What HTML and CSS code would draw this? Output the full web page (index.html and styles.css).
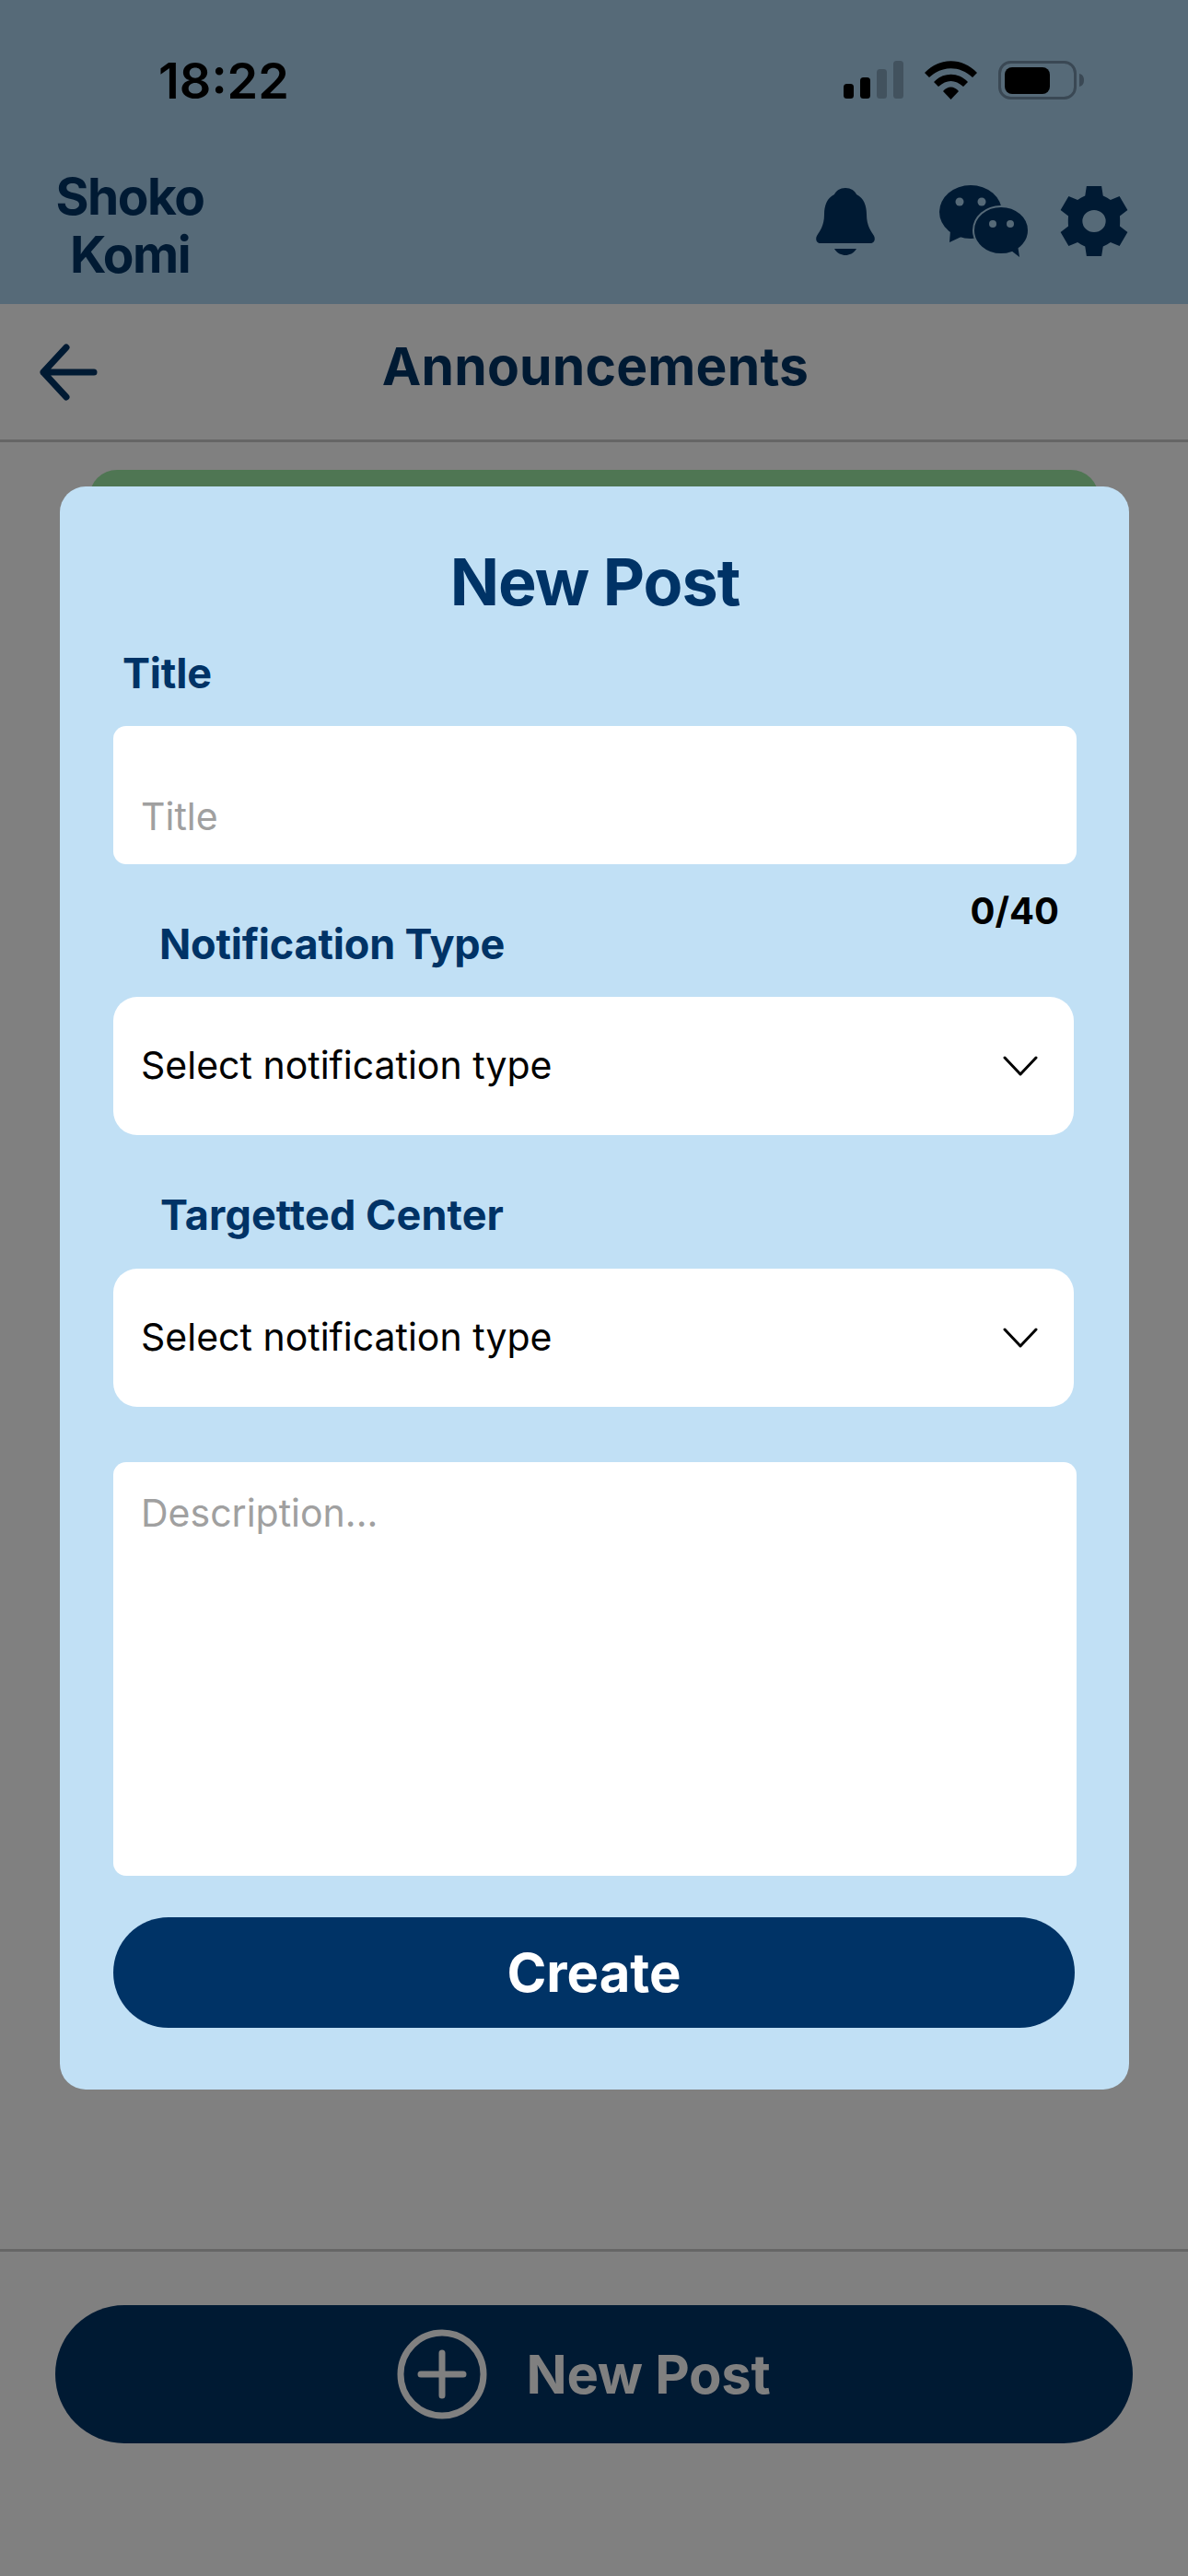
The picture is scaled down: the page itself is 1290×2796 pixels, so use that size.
FILE: index.html
```html
<!DOCTYPE html>
<html lang="en">
<head>
    <meta charset="UTF-8">
    <meta name="viewport" content="width=device-width, initial-scale=1.0">
    <title>New Post</title>
    <link rel="stylesheet" href="styles.css">
</head>
<body>
    <div class="page">
        <header class="top">
            <div class="status-bar">
                <span class="time">18:22</span>
                <div class="status-icons">
                    <svg width="65" height="42" viewBox="0 0 65 42">
                        <rect x="0" y="25" width="11" height="16" rx="3.5" fill="#000"/>
                        <rect x="18" y="18" width="11" height="23" rx="3.5" fill="#000"/>
                        <rect x="36" y="9" width="11" height="32" rx="3.5" fill="#42525e"/>
                        <rect x="54" y="0" width="11" height="41" rx="3.5" fill="#42525e"/>
                    </svg>
                    <svg width="57" height="42" viewBox="0 0 57 42">
                        <path d="M0 13 C16 -4 41 -4 57 13 L52 18 C38 5 19 5 5 18 Z" fill="#000"/>
                        <path d="M10 23 C20 12 37 12 47 23 L42 28 C33 20 24 20 15 28 Z" fill="#000"/>
                        <path d="M20 33 C25 27 32 27 37 33 L28.500 42 Z" fill="#000"/>
                    </svg>
                    <svg width="93" height="42" viewBox="0 0 93 42">
                        <rect x="1.500" y="1.500" width="82" height="39" rx="12" fill="none" stroke="#3a4854" stroke-width="3"/>
                        <rect x="7" y="7" width="49" height="29" rx="8" fill="#000"/>
                        <path d="M88 14 C92 15 93 18 93 21 C93 24 92 27 88 28 Z" fill="#3a4854"/>
                    </svg>
                </div>
            </div>
            <div class="brand-row">
                <div class="brand-name">Shoko<br>Komi</div>
                <div class="brand-icons">
                    <svg class="icon-bell" width="64" height="73" viewBox="0 0 64 73">
                        <path d="M32 0 C38 0 42 3 44 7 C52 11 55 19 55 29 C55 41 60 47 63 52 C65 56 63 60 59 60 L5 60 C1 60 -1 56 1 52 C4 47 9 41 9 29 C9 19 12 11 20 7 C22 3 26 0 32 0 Z" fill="#001a33"/>
                        <path d="M20 66 L44 66 C41 71 36 73 32 73 C28 73 23 71 20 66 Z" fill="#001a33"/>
                    </svg>
                    <svg class="icon-chat" width="98" height="80" viewBox="0 0 98 80">
                        <ellipse cx="34" cy="30" rx="34" ry="29" fill="#001a33"/>
                        <path d="M12 50 L11 63 L28 55 Z" fill="#001a33"/>
                        <ellipse cx="67" cy="50" rx="30" ry="26" fill="#001a33" stroke="#566a78" stroke-width="2"/>
                        <path d="M78 72 L87 79 L85 66 Z" fill="#001a33"/>
                        <circle cx="22" cy="19" r="4.500" fill="#566a78"/>
                        <circle cx="46" cy="19" r="4.500" fill="#566a78"/>
                        <circle cx="58" cy="43" r="4" fill="#566a78"/>
                        <circle cx="77" cy="43" r="4" fill="#566a78"/>
                    </svg>
                    <svg class="icon-gear" width="74" height="76" viewBox="0.8 0.3 22.4 23.4">
                        <path fill-rule="evenodd" d="M9.500 0.300 H14.500 L15 3.500 C15.900 3.900 16.700 4.300 17.500 4.900 L20.500 3.700 L23.200 8.300 L20.600 10.300 C20.700 11.300 20.700 12.700 20.600 13.700 L23.200 15.700 L20.500 20.300 L17.500 19.100 C16.700 19.700 15.900 20.100 15 20.500 L14.500 23.700 H9.500 L9 20.500 C8.100 20.100 7.300 19.700 6.500 19.100 L3.500 20.300 L0.800 15.700 L3.400 13.700 C3.300 12.700 3.300 11.300 3.400 10.300 L0.800 8.300 L3.500 3.700 L6.500 4.900 C7.300 4.300 8.100 3.900 9 3.500 Z M12 8.300 A3.900 3.700 0 1 0 12 15.700 A3.900 3.700 0 1 0 12 8.300 Z" fill="#001a33"/>
                    </svg>
                </div>
            </div>
        </header>

        <nav class="nav-bar">
            <svg width="66" height="62" viewBox="0 0 66 62">
                <path d="M32 4 L7 31 L32 58 M7 31 H62" fill="none" stroke="#001a33" stroke-width="7" stroke-linecap="round" stroke-linejoin="round"/>
            </svg>
            <h1 class="nav-title">Announcements</h1>
        </nav>

        <main class="feed">
            <div class="feed-card"></div>
        </main>

        <footer class="bottom-bar">
            <div class="new-post-btn">
                <svg width="98" height="98" viewBox="0 0 98 98">
                    <circle cx="49" cy="49" r="45" fill="none" stroke="#808080" stroke-width="7"/>
                    <path d="M26 49 H72 M49 26 V72" fill="none" stroke="#808080" stroke-width="7" stroke-linecap="round"/>
                </svg>
                <span>New Post</span>
            </div>
        </footer>

        <section class="modal">
            <h2 class="modal-title">New Post</h2>
            <div class="field-label title-label">Title</div>
            <div class="text-input title-input">Title</div>
            <div class="label-row">
                <div class="field-label notif-label">Notification Type</div>
                <div class="counter">0/40</div>
            </div>
            <div class="select-box">
                <span>Select notification type</span>
                <svg width="38" height="22" viewBox="0 0 38 22">
                    <path d="M2 2 L19 20 L36 2" fill="none" stroke="#000" stroke-width="3" stroke-linecap="round" stroke-linejoin="round"/>
                </svg>
            </div>
            <div class="field-label center-label">Targetted Center</div>
            <div class="select-box">
                <span>Select notification type</span>
                <svg width="38" height="22" viewBox="0 0 38 22">
                    <path d="M2 2 L19 20 L36 2" fill="none" stroke="#000" stroke-width="3" stroke-linecap="round" stroke-linejoin="round"/>
                </svg>
            </div>
            <div class="text-input description">Description...</div>
            <div class="create-btn">Create</div>
        </section>
    </div>
</body>
</html>
```

FILE: styles.css
```css
* {
    box-sizing: border-box;
}
body {
    margin: 0;
    font-family: Inter, "Noto Sans", sans-serif;
    background-color: #808080;
}
.page {
    position: relative;
    display: flex;
    flex-direction: column;
    width: 1290px;
    height: 2796px;
    overflow: hidden;
    background-color: #808080;
}

/* header */
.top {
    height: 330px;
    background-color: #566a78;
}
.status-bar {
    display: flex;
    justify-content: space-between;
    align-items: center;
    height: 174px;
    padding: 0 113px 0 172px;
}
.time {
    font-size: 54px;
    font-weight: 600;
    color: #000;
}
.status-icons {
    display: flex;
    align-items: center;
    gap: 23px;
}
.brand-row {
    display: flex;
    align-items: center;
    height: 156px;
    padding: 0 65px 24px 51px;
}
.brand-name {
    align-self: flex-start;
    width: 180px;
    margin-top: 8px;
    font-size: 55px;
    font-weight: 700;
    line-height: 63px;
    letter-spacing: -1.5px;
    text-align: center;
    color: #001a33;
}
.brand-icons {
    display: flex;
    align-items: center;
    margin-left: auto;
}
.icon-chat {
    margin-left: 70px;
}
.icon-gear {
    margin-left: 33px;
}

/* nav */
.nav-bar {
    display: flex;
    align-items: center;
    height: 150px;
    padding: 0 103px 0 40px;
    border-bottom: 3px solid #666;
}
.nav-title {
    flex: 1;
    margin: 0 0 12px;
    font-size: 57px;
    font-weight: 700;
    letter-spacing: 0.2px;
    text-align: center;
    color: #001a33;
}

/* page behind the modal */
.feed {
    flex: 1;
    padding: 30px 97px 0;
}
.feed-card {
    height: 300px;
    background-color: #4f7653;
    border-radius: 30px;
}
.bottom-bar {
    height: 355px;
    padding: 58px 60px 0;
    border-top: 3px solid #666;
}
.new-post-btn {
    display: flex;
    justify-content: center;
    align-items: center;
    gap: 42px;
    height: 150px;
    padding-right: 22px;
    font-size: 58px;
    font-weight: 700;
    letter-spacing: -0.3px;
    color: #808080;
    background-color: #001a33;
    border-radius: 75px;
}

/* modal */
.modal {
    position: absolute;
    top: 528px;
    left: 65px;
    width: 1161px;
    height: 1740px;
    padding: 62px 57px 0 58px;
    background-color: #c1e0f5;
    border-radius: 28px;
}
.modal-title {
    margin: 0;
    font-size: 70px;
    font-weight: 700;
    line-height: 84px;
    letter-spacing: -1px;
    text-align: center;
    color: #003366;
}
.field-label {
    font-size: 45px;
    font-weight: 700;
    line-height: 52px;
    letter-spacing: -0.2px;
    color: #003366;
}
.title-label {
    margin: 31px 0 31px 10px;
}
.text-input {
    width: 1046px;
    padding-left: 30px;
    font-size: 41px;
    line-height: 48px;
    color: #a0a0a0;
    background-color: #fff;
    border-radius: 14px;
}
.title-input {
    height: 150px;
    padding-top: 74px;
}
.label-row {
    display: flex;
    justify-content: space-between;
    align-items: flex-start;
    margin: 27px 0 31px;
    padding: 0 19px 0 50px;
}
.notif-label {
    padding-top: 34px;
}
.counter {
    font-size: 40px;
    font-weight: 700;
    line-height: 48px;
    color: #000;
}
.select-box {
    display: flex;
    justify-content: space-between;
    align-items: center;
    width: 1043px;
    height: 150px;
    padding: 0 39px 2px 30px;
    font-size: 41px;
    color: #000;
    background-color: #fff;
    border-radius: 26px;
}
.select-box svg {
    margin-top: 2px;
}
.center-label {
    margin: 61px 0 32px 51px;
    letter-spacing: 0.1px;
}
.description {
    height: 449px;
    margin-top: 60px;
    padding-top: 31px;
}
.create-btn {
    display: flex;
    justify-content: center;
    align-items: center;
    width: 1044px;
    height: 120px;
    margin-top: 45px;
    font-size: 58px;
    font-weight: 700;
    color: #fff;
    background-color: #003366;
    border-radius: 60px;
}
```
